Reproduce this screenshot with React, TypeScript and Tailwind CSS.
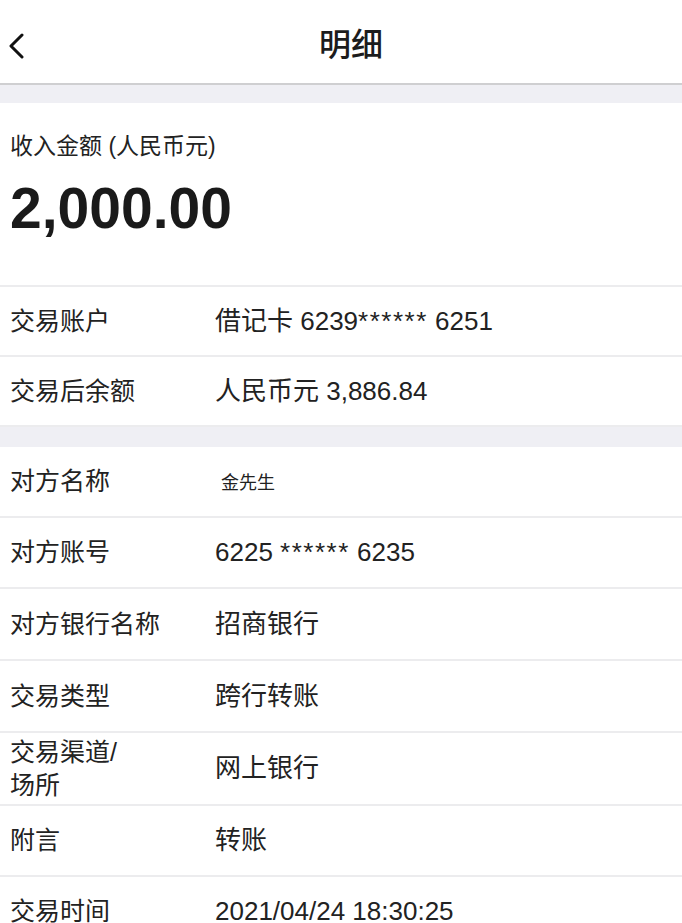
const font = {
  fontFamily: '"Liberation Sans", "Noto Sans CJK SC", sans-serif',
};

type Row = { label: React.ReactNode; value: React.ReactNode; h?: string };

// heights include the 2px bottom border (border-box)
function DetailRow({ label, value, h = "h-[71px]" }: Row) {
  return (
    <div
      className={`flex items-center border-b-2 border-[#ececee] bg-white ${h}`}
    >
      <div className="w-[215px] shrink-0 pl-[10px] text-[25px] leading-[33px] text-[#222]">
        {label}
      </div>
      <div className="text-[26px] leading-[33px] text-[#222]">{value}</div>
    </div>
  );
}

function Mask() {
  return <span className="tracking-[1.5px]">******</span>;
}

export default function App() {
  return (
    <div className="min-h-[923px] w-[682px] overflow-hidden bg-white" style={font}>
      {/* NAV */}
      <div className="relative flex h-[85px] items-center justify-center border-b-2 border-[#cfcfd1] bg-white pt-[6px]">
        <svg
          className="absolute left-[7px] top-[33px]"
          width="18"
          height="26"
          viewBox="0 0 18 26"
          fill="none"
        >
          <polyline
            points="15,2 4,13 15,24"
            stroke="#111"
            strokeWidth="3"
            strokeLinecap="round"
            strokeLinejoin="round"
          />
        </svg>
        <h1 className="ml-[20px] text-[32px] font-medium leading-none text-[#1c1c1c]">明细</h1>
      </div>

      <div className="h-[18px] bg-[#efeff4]" />

      {/* AMOUNT */}
      <div className="h-[184px] border-b-2 border-[#ececee] bg-white px-[10px] pt-[29px]">
        <div className="text-[23px] leading-[28px] text-[#222]">收入金额 (人民币元)</div>
        <div className="mt-[20px] text-[57px] font-bold leading-[57px] text-[#1a1a1a]">
          2,000.00
        </div>
      </div>

      <DetailRow
        label="交易账户"
        value={
          <>
            借记卡 6239<Mask /> 6251
          </>
        }
        h="h-[70px]"
      />
      <DetailRow label="交易后余额" value="人民币元 3,886.84" h="h-[70px] border-b-0" />

      <div className="h-[20px] bg-[#efeff4]" />

      <DetailRow
        label="对方名称"
        value={<span className="ml-[6px] text-[18px]">金先生</span>}
      />
      <DetailRow
        label="对方账号"
        value={
          <>
            6225 <Mask /> 6235
          </>
        }
      />
      <DetailRow label="对方银行名称" value="招商银行" h="h-[72px]" />
      <DetailRow label="交易类型" value="跨行转账" h="h-[72px]" />
      <DetailRow
        label={
          <>
            交易渠道/
            <br />
            场所
          </>
        }
        value="网上银行"
        h="h-[73px]"
      />
      <DetailRow label="附言" value="转账" />
      <DetailRow label="交易时间" value="2021/04/24 18:30:25" />
    </div>
  );
}
